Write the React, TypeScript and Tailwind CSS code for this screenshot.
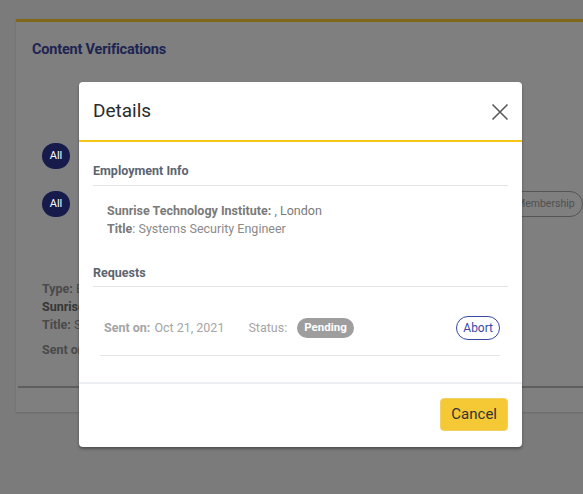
import React from "react";

export default function App() {
  return (
    <div
      className="relative w-[583px] h-[494px] overflow-hidden bg-[#7b7b7b]"
      style={{ fontFamily: "Roboto, 'Liberation Sans', sans-serif" }}
    >
      {/* Background page */}
      <div className="pt-[19px] pl-[16px]">
        <div className="w-[600px] h-[393px] bg-[#7f7f7f] border-t-[3px] border-[#806818] shadow-[0_1px_2px_rgba(0,0,0,0.15)] flex flex-col">
          <div className="pl-[16px] pt-[17px] text-[14.5px] font-bold text-[#1e2452] tracking-[-0.2px]">
            Content Verifications
          </div>
          <div className="pl-[26px] mt-[82px] flex flex-col gap-[22px]">
            <div className="w-[28px] h-[26px] rounded-full bg-[#161b4c] text-white text-[11px] flex items-center justify-center">
              All
            </div>
            <div className="flex items-center">
              <div className="w-[28px] h-[26px] rounded-full bg-[#161b4c] text-white text-[11px] flex items-center justify-center">
                All
              </div>
              <div className="ml-[438px] h-[26px] px-[7px] rounded-full border border-[#555] text-[10.5px] text-[#505050] flex items-center">
                Membership
              </div>
            </div>
          </div>
          <div className="pl-[26px] mt-[63px] text-[12.5px] leading-[18px] text-[#4a4a4a]">
            <div><span className="font-bold">Type:</span> Employment</div>
            <div className="font-bold text-[#363636]">Sunrise Technology Institute</div>
            <div><span className="font-bold">Title:</span> Systems</div>
            <div className="font-bold mt-[7px]">Sent on</div>
          </div>
          <div className="mt-[27px] ml-[2px] h-[2px] bg-[#5e5e5e]" />
        </div>
      </div>

      {/* Modal */}
      <div className="absolute left-[79px] top-[82px] w-[443px] h-[365px] bg-white rounded-[4px] shadow-[0_2px_3px_rgba(0,0,0,0.35)] flex flex-col">
        <div className="h-[58px] flex items-center justify-between pl-[14px] pr-[13px]">
          <div className="text-[19px] text-[#2b2b2b] pt-[1px]">Details</div>
          <svg width="18" height="18" viewBox="0 0 18 18" className="mt-[2px]">
            <path d="M1.5 1.5 L16.5 16.5 M16.5 1.5 L1.5 16.5" stroke="#5a5a5a" strokeWidth="1.6" fill="none" />
          </svg>
        </div>
        <div className="h-[2px] bg-[#f5c518]" />
        <div className="px-[14px] pt-[21px]">
          <div className="text-[12.5px] font-bold text-[#5c6470] leading-[16px]">Employment Info</div>
          <div className="mt-[6px] h-px bg-[#e2e4e8]" />
          <div className="pl-[14px] pt-[16px] text-[12.5px] leading-[18px] text-[#8a8a8a]">
            <div>
              <span className="font-bold text-[#7a7a7a]">Sunrise Technology Institute:</span>
              <span className="text-[#7a7a7a]"> , London</span>
            </div>
            <div>
              <span className="font-bold text-[#7a7a7a]">Title</span>: Systems Security Engineer
            </div>
          </div>
          <div className="mt-[27px] text-[12.5px] font-bold text-[#5c6470] leading-[16px]">Requests</div>
          <div className="mt-[5px] h-px bg-[#e2e4e8]" />
          <div className="ml-[7px] mr-[8px] pt-[29px] pb-[15px] border-b border-[#e2e4e8] flex items-center justify-between">
            <div className="flex items-center pl-[4px] text-[12.5px] text-[#a5a5a5]">
              <span className="font-bold">Sent on:</span>
              <span className="ml-[4px]">Oct 21, 2021</span>
              <span className="ml-[24px]">Status:</span>
              <span className="ml-[10px] h-[20px] px-[7px] rounded-full bg-[#9e9e9e] text-white text-[11.5px] font-bold flex items-center">
                Pending
              </span>
            </div>
            <div className="h-[24px] px-[6px] rounded-full border-[1.5px] border-[#3a47a8] text-[#3a47a8] text-[12px] flex items-center">
              Abort
            </div>
          </div>
        </div>
        <div className="mt-[26px] h-[2px] bg-[#eceef1]" />
        <div className="flex justify-end pr-[14px] pt-[14px]">
          <div className="h-[33px] px-[10px] rounded-[4px] bg-[#f4c935] border border-[#f0d060] text-[15px] text-[#333] flex items-center">
            Cancel
          </div>
        </div>
      </div>
    </div>
  );
}
